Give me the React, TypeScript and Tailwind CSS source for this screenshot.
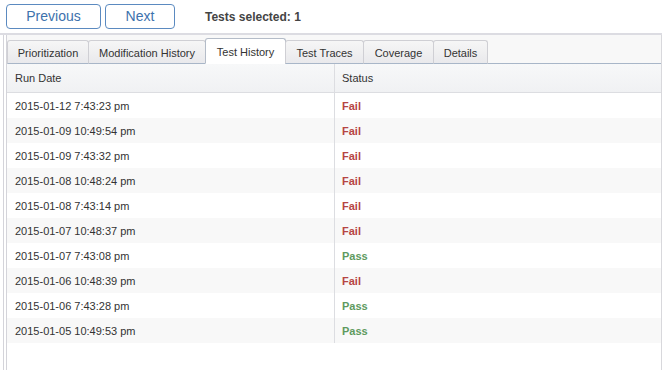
import React from "react";

const tabs = [
    { name: "Prioritization", w: "w-[82px]" },
    { name: "Modification History", w: "w-[118px]" },
    { name: "Test History", w: "w-[81px]", active: true },
    { name: "Test Traces", w: "w-[79px]" },
    { name: "Coverage", w: "w-[71px]" },
    { name: "Details", w: "w-[55px]" },
];

const runs = [
    { date: "2015-01-12 7:43:23 pm", pass: false },
    { date: "2015-01-09 10:49:54 pm", pass: false },
    { date: "2015-01-09 7:43:32 pm", pass: false },
    { date: "2015-01-08 10:48:24 pm", pass: false },
    { date: "2015-01-08 7:43:14 pm", pass: false },
    { date: "2015-01-07 10:48:37 pm", pass: false },
    { date: "2015-01-07 7:43:08 pm", pass: true },
    { date: "2015-01-06 10:48:39 pm", pass: false },
    { date: "2015-01-06 7:43:28 pm", pass: true },
    { date: "2015-01-05 10:49:53 pm", pass: true },
];

const App = () => {
    return (
        <div className="w-[662px] h-[370px] bg-white overflow-hidden flex flex-col font-['Liberation_Sans',Arial,sans-serif] text-[#333]">
            {/* Toolbar */}
            <div className="h-[33px] flex items-start pt-[4px] pl-[6px] shrink-0">
                <button className="w-[95px] h-[25px] rounded-[4px] border border-[#5b8ac0] text-[#3d72ad] text-[14px] bg-white">
                    Previous
                </button>
                <button className="ml-[4px] w-[70px] h-[25px] rounded-[4px] border border-[#5b8ac0] text-[#3d72ad] text-[14px] bg-white">
                    Next
                </button>
                <span className="ml-[30px] mt-[4px] text-[12px] font-bold text-[#444]">Tests selected: 1</span>
            </div>
            <div className="h-[2px] bg-[#dcdce2] shrink-0" />

            {/* Panel */}
            <div className="flex-1 flex flex-col ml-[3px] border-l border-[#d4d4da] min-h-0">
                <div className="flex-1 flex flex-col ml-[2px] border-l border-[#d4d4da] border-r border-r-[#d8d8dc] min-h-0">
                    {/* Tab bar */}
                    <div className="h-[29px] bg-[#f8f8f8] flex items-end border-b border-[#a8b6c8] shrink-0">
                        {tabs.map((t) => (
                            <div
                                key={t.name}
                                className={`${t.w} text-[11px] text-center -mb-px -ml-px first:ml-0 ${
                                    t.active
                                        ? "h-[26px] leading-[27px] bg-white border border-[#b4bcc8] border-b-white rounded-t-[3px]"
                                        : "h-[24px] leading-[25px] bg-gradient-to-b from-[#f6f6f6] to-[#e9e9ec] border border-[#cfcfd4] border-b-[#a8b6c8] rounded-t-[3px]"
                                }`}
                            >
                                {t.name}
                            </div>
                        ))}
                    </div>

                    {/* Table */}
                    <div className="flex-1 bg-white">
                        <div className="flex h-[29px] bg-gradient-to-b from-[#f7f8f9] to-[#f0f1f3] border-b border-[#dcdde1] text-[11px] items-center">
                            <div className="w-[328px] pl-[8px] pt-px h-full flex items-center border-r border-[#dcdde1]">Run Date</div>
                            <div className="pl-[7px] pt-px">Status</div>
                        </div>
                        {runs.map((r, i) => (
                            <div key={i} className={`flex h-[25px] text-[11px] items-center ${i % 2 === 1 ? "bg-[#f8f8f8]" : "bg-white"}`}>
                                <div className="w-[328px] pl-[8px] pt-px h-full flex items-center border-r border-[#dcdde1]">{r.date}</div>
                                <div className={`pl-[7px] pt-px font-bold ${r.pass ? "text-[#5e9a5e]" : "text-[#b64543]"}`}>
                                    {r.pass ? "Pass" : "Fail"}
                                </div>
                            </div>
                        ))}
                    </div>
                </div>
            </div>
        </div>
    );
};

export default App;
